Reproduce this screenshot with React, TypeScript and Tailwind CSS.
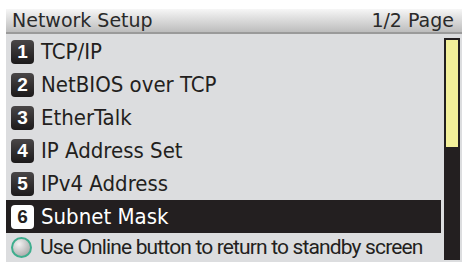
import React from 'react';

const items = [
  'TCP/IP',
  'NetBIOS over TCP',
  'EtherTalk',
  'IP Address Set',
  'IPv4 Address',
  'Subnet Mask',
];

const Badge: React.FC<{ n: number; active?: boolean }> = ({ n, active }) => (
  <div
    className={`w-[23px] h-[24px] shrink-0 rounded-[4px] flex items-center justify-center text-[19px] font-bold leading-none ${
      active
        ? 'bg-white text-[#231f20]'
        : 'bg-gradient-to-b from-[#4a4748] to-[#1c1a1b] text-white'
    }`}
    style={{ fontFamily: '"Liberation Sans", Arial, sans-serif' }}
  >
    {n}
  </div>
);

export default function App() {
  return (
    <div className="w-[465px] h-[262px] bg-white pt-[9px] pl-[6px] pr-[3px] overflow-hidden">
      <div
        className="w-full h-full flex flex-col bg-[#dcdddf]"
        style={{ fontFamily: '"DejaVu Sans", Verdana, sans-serif' }}
      >
        {/* title bar */}
        <div className="h-[25px] shrink-0 flex items-center justify-between pl-[6px] pr-[8px] bg-gradient-to-b from-[#f6f6f6] to-[#bdbdbd] border-b-2 border-[#9a9a9a] text-[19px] text-[#2a2a2a] leading-none">
          <span>Network Setup</span>
          <span>1/2 Page</span>
        </div>

        <div className="flex-1 flex">
          <div className="flex-1 flex flex-col pt-[1px]">
            {items.map((label, i) => {
              const active = i === items.length - 1;
              return (
                <div
                  key={label}
                  className={`h-[33px] flex items-center pl-[5px] gap-[7px] text-[22px] leading-none whitespace-nowrap ${
                    active ? 'bg-[#231f20] text-white' : 'text-[#231f20]'
                  }`}
                  style={{ fontFamily: '"DejaVu Sans Condensed", "DejaVu Sans", sans-serif' }}
                >
                  <Badge n={i + 1} active={active} />
                  <span>{label}</span>
                </div>
              );
            })}
            <div
              className="flex-1 flex items-center pl-[5px] gap-[8px] text-[#231f20] text-[21px] leading-none whitespace-nowrap"
              style={{ fontFamily: 'Roboto, sans-serif' }}
            >
              <div className="w-[21px] h-[21px] shrink-0 rounded-full border-2 border-[#3fae8e] bg-[radial-gradient(circle_at_35%_30%,#f2f2f2,#9a9a9a)]" />
              <span className="tracking-[-0.85px]">Use Online button to return to standby screen</span>
            </div>
          </div>

          {/* scroll bar */}
          <div className="w-[16px] shrink-0 ml-[3px] mr-[2px] mt-[4px] mb-[2px] border-2 border-[#231f20] bg-[#231f20] flex flex-col">
            <div className="h-[107px] bg-[#f3f09a]" />
          </div>
        </div>
      </div>
    </div>
  );
}
